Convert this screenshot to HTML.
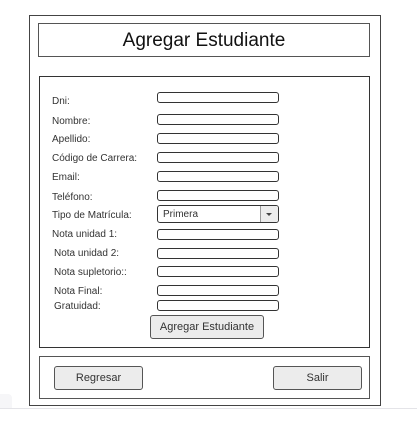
<!DOCTYPE html>
<html><head><meta charset="utf-8"><style>
*{margin:0;padding:0;box-sizing:border-box}
body{width:417px;height:423px;background:#fff;position:relative;overflow:hidden;font-family:"Liberation Sans",sans-serif;color:#222}
.a{position:absolute}
.box{border:1px solid #333}
.in{position:absolute;left:157px;width:122px;height:11px;border:1px solid #333;border-radius:3px;background:#fff}
.lb{position:absolute;font-size:10px;line-height:12px;color:#333}
.btn{position:absolute;background:#ececec;border:1px solid #555;border-radius:3px;font-size:11px;text-align:center;color:#333}
</style></head><body>
<div class="a box" style="left:29px;top:15px;width:352px;height:391px;border-color:#444"></div>
<div class="a box" style="left:38px;top:23px;width:332px;height:34px;border-color:#555"></div>
<div class="a" style="left:38px;top:24px;width:332px;height:34px;text-align:center;font-size:19px;line-height:34px;color:#111">Agregar Estudiante</div>
<div class="a box" style="left:39px;top:76px;width:331px;height:272px"></div>
<div class="a box" style="left:39px;top:356px;width:331px;height:43px;border-color:#555"></div>

<div class="lb" style="left:52px;top:96px">Dni:</div>
<div class="lb" style="left:52px;top:116px">Nombre:</div>
<div class="lb" style="left:52px;top:134px">Apellido:</div>
<div class="lb" style="left:52px;top:153px">Código de Carrera:</div>
<div class="lb" style="left:52px;top:172px">Email:</div>
<div class="lb" style="left:52px;top:192px">Teléfono:</div>
<div class="lb" style="left:52px;top:210px">Tipo de Matrícula:</div>
<div class="lb" style="left:52px;top:229px">Nota unidad 1:</div>
<div class="lb" style="left:54px;top:248px">Nota unidad 2:</div>
<div class="lb" style="left:54px;top:267px">Nota supletorio::</div>
<div class="lb" style="left:54px;top:286px">Nota Final:</div>
<div class="lb" style="left:54px;top:301px">Gratuidad:</div>

<div class="in" style="top:92px"></div>
<div class="in" style="top:114px"></div>
<div class="in" style="top:133px"></div>
<div class="in" style="top:152px"></div>
<div class="in" style="top:171px"></div>
<div class="in" style="top:190px"></div>
<div class="in" style="top:205px;height:18px;border-radius:3px"></div>
<div class="a" style="left:260px;top:206px;width:18px;height:16px;background:#ececec;border-left:1px solid #999;border-radius:0 2px 2px 0"></div>
<div class="a" style="left:266px;top:213px;width:0;height:0;border-left:3px solid transparent;border-right:3px solid transparent;border-top:3px solid #444"></div>
<div class="lb" style="left:163px;top:209px;font-size:10px">Primera</div>
<div class="in" style="top:229px"></div>
<div class="in" style="top:248px"></div>
<div class="in" style="top:266px"></div>
<div class="in" style="top:285px"></div>
<div class="in" style="top:300px"></div>

<div class="btn" style="left:150px;top:315px;width:114px;height:24px;line-height:22px">Agregar Estudiante</div>
<div class="btn" style="left:54px;top:366px;width:89px;height:24px;line-height:22px">Regresar</div>
<div class="btn" style="left:273px;top:366px;width:89px;height:24px;line-height:22px">Salir</div>

<div class="a" style="left:0;top:408px;width:417px;height:1px;background:#e4e4e8"></div>
<div class="a" style="left:0;top:394px;width:12px;height:14px;background:#f6f6f8;border-radius:0 4px 0 0"></div>
</body></html>
